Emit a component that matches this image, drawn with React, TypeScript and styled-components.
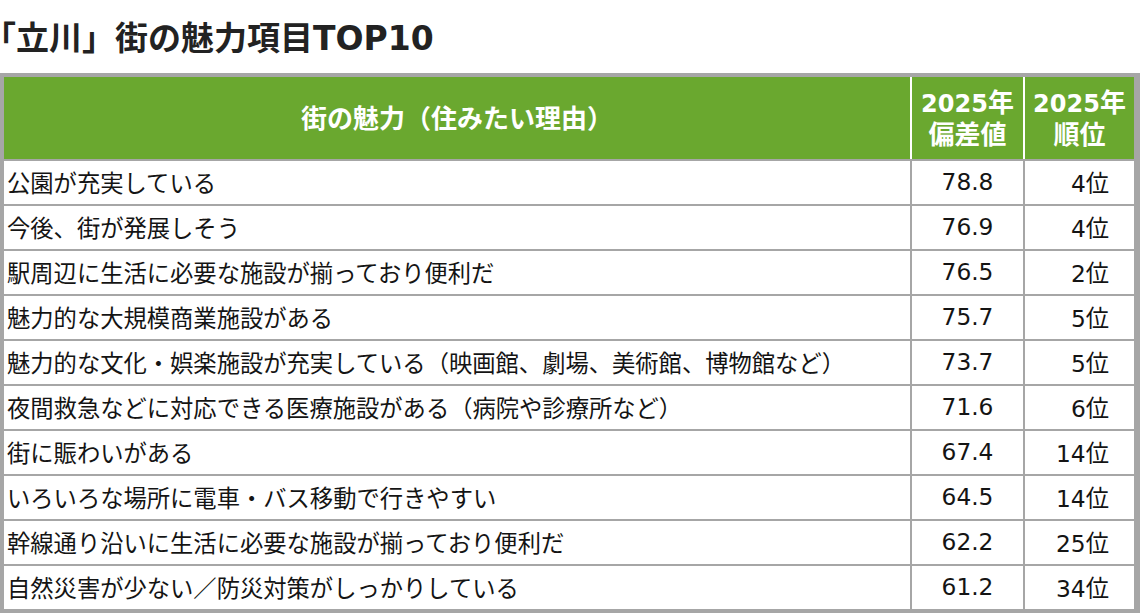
import React from "react";
import styled, { createGlobalStyle } from "styled-components";

const GlobalStyle = createGlobalStyle`
  html, body {
    margin: 0;
    padding: 0;
    background: #ffffff;
  }
  body {
    font-family: "DejaVu Sans", "Noto Sans CJK JP", sans-serif;
    color: #1a1a1a;
    overflow: hidden;
  }
`;

const Page = styled.div`
  width: 1140px;
  height: 613px;
  overflow: hidden;
`;

const Title = styled.h1`
  margin: 0 0 0 -17px;
  height: 73px;
  display: flex;
  align-items: center;
  padding-bottom: 1px;
  box-sizing: border-box;
  font-size: 33px;
  font-weight: 700;
  color: #222222;
  white-space: nowrap;
`;

const Table = styled.div`
  display: flex;
  flex-direction: column;
  gap: 2px;
  background: #a6a6a6;
  padding: 4px 6px 4px 4px;
  width: 1140px;
  box-sizing: border-box;
`;

const HeaderRow = styled.div`
  display: grid;
  grid-template-columns: 906px 111px 109px;
  gap: 2px;
  background: #ffffff;
  height: 82px;
`;

const HeadCell = styled.div`
  background: #6aa82f;
  color: #ffffff;
  font-weight: 700;
  font-size: 26px;
  line-height: 31px;
  display: flex;
  align-items: center;
  justify-content: center;
  text-align: center;
  padding-top: 3px;
  box-sizing: border-box;
`;

const HeadLabel = styled.div`
  white-space: nowrap;
`;

const Year = styled.span`
  font-size: 24px;
`;

const Row = styled.div`
  display: grid;
  grid-template-columns: 906px 111px 109px;
  gap: 2px;
  height: 43px;
`;

const Cell = styled.div<{ $align: "left" | "center" | "right" }>`
  background: #ffffff;
  font-size: 23.3px;
  display: flex;
  align-items: center;
  justify-content: ${(p) =>
    p.$align === "left" ? "flex-start" : p.$align === "center" ? "center" : "flex-end"};
  padding: ${(p) =>
    p.$align === "left" ? "0 0 2px 3px" : p.$align === "right" ? "0 25px 2px 0" : "0 0 2px 0"};
  box-sizing: border-box;
  white-space: nowrap;
  color: #141414;
`;

const rows: [string, string, string][] = [
  ["公園が充実している", "78.8", "4位"],
  ["今後、街が発展しそう", "76.9", "4位"],
  ["駅周辺に生活に必要な施設が揃っており便利だ", "76.5", "2位"],
  ["魅力的な大規模商業施設がある", "75.7", "5位"],
  ["魅力的な文化・娯楽施設が充実している（映画館、劇場、美術館、博物館など）", "73.7", "5位"],
  ["夜間救急などに対応できる医療施設がある（病院や診療所など）", "71.6", "6位"],
  ["街に賑わいがある", "67.4", "14位"],
  ["いろいろな場所に電車・バス移動で行きやすい", "64.5", "14位"],
  ["幹線通り沿いに生活に必要な施設が揃っており便利だ", "62.2", "25位"],
  ["自然災害が少ない／防災対策がしっかりしている", "61.2", "34位"],
];

export default function App() {
  return (
    <Page>
      <GlobalStyle />
      <Title>「立川」街の魅力項目TOP10</Title>
      <Table>
        <HeaderRow>
          <HeadCell>
            <HeadLabel>街の魅力（住みたい理由）</HeadLabel>
          </HeadCell>
          <HeadCell>
            <HeadLabel>
              <Year>2025</Year>年
              <br />
              偏差値
            </HeadLabel>
          </HeadCell>
          <HeadCell>
            <HeadLabel>
              <Year>2025</Year>年
              <br />
              順位
            </HeadLabel>
          </HeadCell>
        </HeaderRow>
        {rows.map(([label, score, rank]) => (
          <Row key={label}>
            <Cell $align="left">{label}</Cell>
            <Cell $align="center">{score}</Cell>
            <Cell $align="right">{rank}</Cell>
          </Row>
        ))}
      </Table>
    </Page>
  );
}
